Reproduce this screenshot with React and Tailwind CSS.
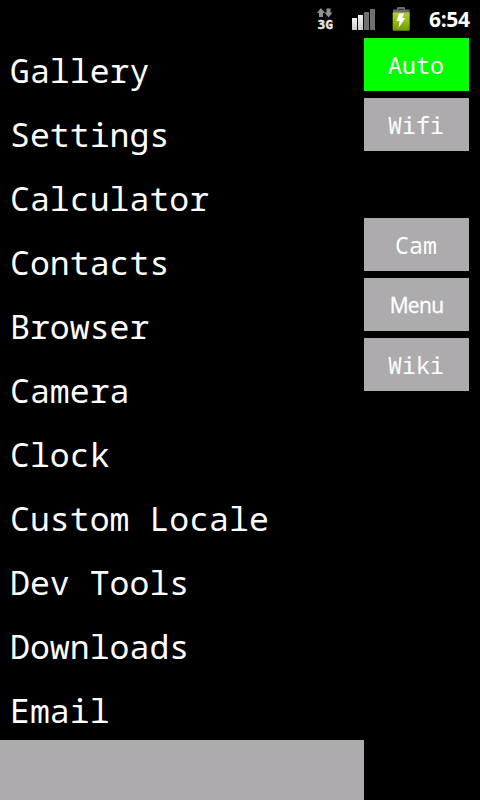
const apps = [
  'Gallery', 'Settings', 'Calculator', 'Contacts', 'Browser', 'Camera',
  'Clock', 'Custom Locale', 'Dev Tools', 'Downloads', 'Email',
];

const mono = "font-['Droid_Sans_Mono','Noto_Sans_Mono','DejaVu_Sans_Mono',monospace]";

function StatusIcons() {
  return (
    <svg width="104" height="38" viewBox="312 0 104 38" className="shrink-0">
      <defs>
        <linearGradient id="cell" x1="0" y1="0" x2="0" y2="1">
          <stop offset="0" stopColor="#b5d12b" />
          <stop offset="0.5" stopColor="#93bd0c" />
          <stop offset="1" stopColor="#6b9800" />
        </linearGradient>
        <linearGradient id="bar" x1="0" y1="0" x2="0" y2="1">
          <stop offset="0" stopColor="#f2f2f2" />
          <stop offset="1" stopColor="#c8c8c8" />
        </linearGradient>
      </defs>
      <path d="M321 8l4 5h-2v4h-4v-4h-2z" fill="#8f8f8f" />
      <path d="M328.500 17.500l4-5h-2v-4h-4v4h-2z" fill="#8f8f8f" />
      <text x="317.500" y="29" textLength="15.500" lengthAdjust="spacingAndGlyphs" fill="#e8e8e8" stroke="#e8e8e8" strokeWidth="0.400" className="font-['DejaVu_Sans_Mono',monospace] text-[13px] font-bold">3G</text>
      <path d="M352 18h5v12h-5z" fill="url(#bar)" />
      <path d="M358 15h5v15h-5z" fill="url(#bar)" />
      <path d="M364 12h5v18h-5z" fill="#707070" />
      <path d="M370 9h5v21h-5z" fill="#707070" />
      <path d="M393 13V9.500h4V8q0-1 1-1h6q1 0 1 1v1.500h4.500V13z" fill="#6c6c6c" />
      <path d="M398.500 9.500h5" stroke="#333" />
      <path d="M392.700 12.500h17v17q0 1.300-1 1.300h-15q-1 0-1-1.300z" fill="url(#cell)" />
      <path d="M399 13.500h5l-1.700 4.500h3L398.500 28l1-7H396.500z" fill="#fff" />
    </svg>
  );
}

function Key({ label, tone = 'bg-[#adabad]', face = mono + ' text-[23.250px] pt-[3px] pr-px' }) {
  return (
    <button className={`flex h-[53px] w-[105px] items-center justify-center leading-none text-white ${tone} ${face}`}>
      {label}
    </button>
  );
}

export default function App() {
  return (
    <div className="flex h-[800px] w-[480px] flex-col overflow-hidden bg-black text-white">
      <header className="flex h-[38px] shrink-0 items-center pl-[312px]">
        <StatusIcons />
        <span className="ml-[13px] pt-px font-['Open_Sans',sans-serif] text-[21px] leading-none font-bold tracking-[-0.350px]">6:54</span>
      </header>
      <main className="flex min-h-0 flex-1">
        <section className="flex w-[364px] flex-col">
          <ul className="h-[702px] shrink-0 overflow-hidden">
            {apps.map((app) => (
              <li key={app} className={`flex h-16 items-center pt-[2px] pl-[10px] text-[33.200px] leading-none whitespace-pre ${mono}`}>
                {app}
              </li>
            ))}
          </ul>
          <div className="h-[60px] shrink-0 bg-[#adabad]" />
        </section>
        <nav className="flex flex-col gap-[7px]">
          <Key label="Auto" tone="bg-[#00ff00]" />
          <Key label="Wifi" />
          <div className="h-[53px]" />
          <Key label="Cam" />
          <Key label="Menu" face="font-['Open_Sans',sans-serif] text-[21px] tracking-[-0.700px] pt-[2px] [-webkit-text-stroke:0.300px_white]" />
          <Key label="Wiki" />
        </nav>
      </main>
    </div>
  );
}
